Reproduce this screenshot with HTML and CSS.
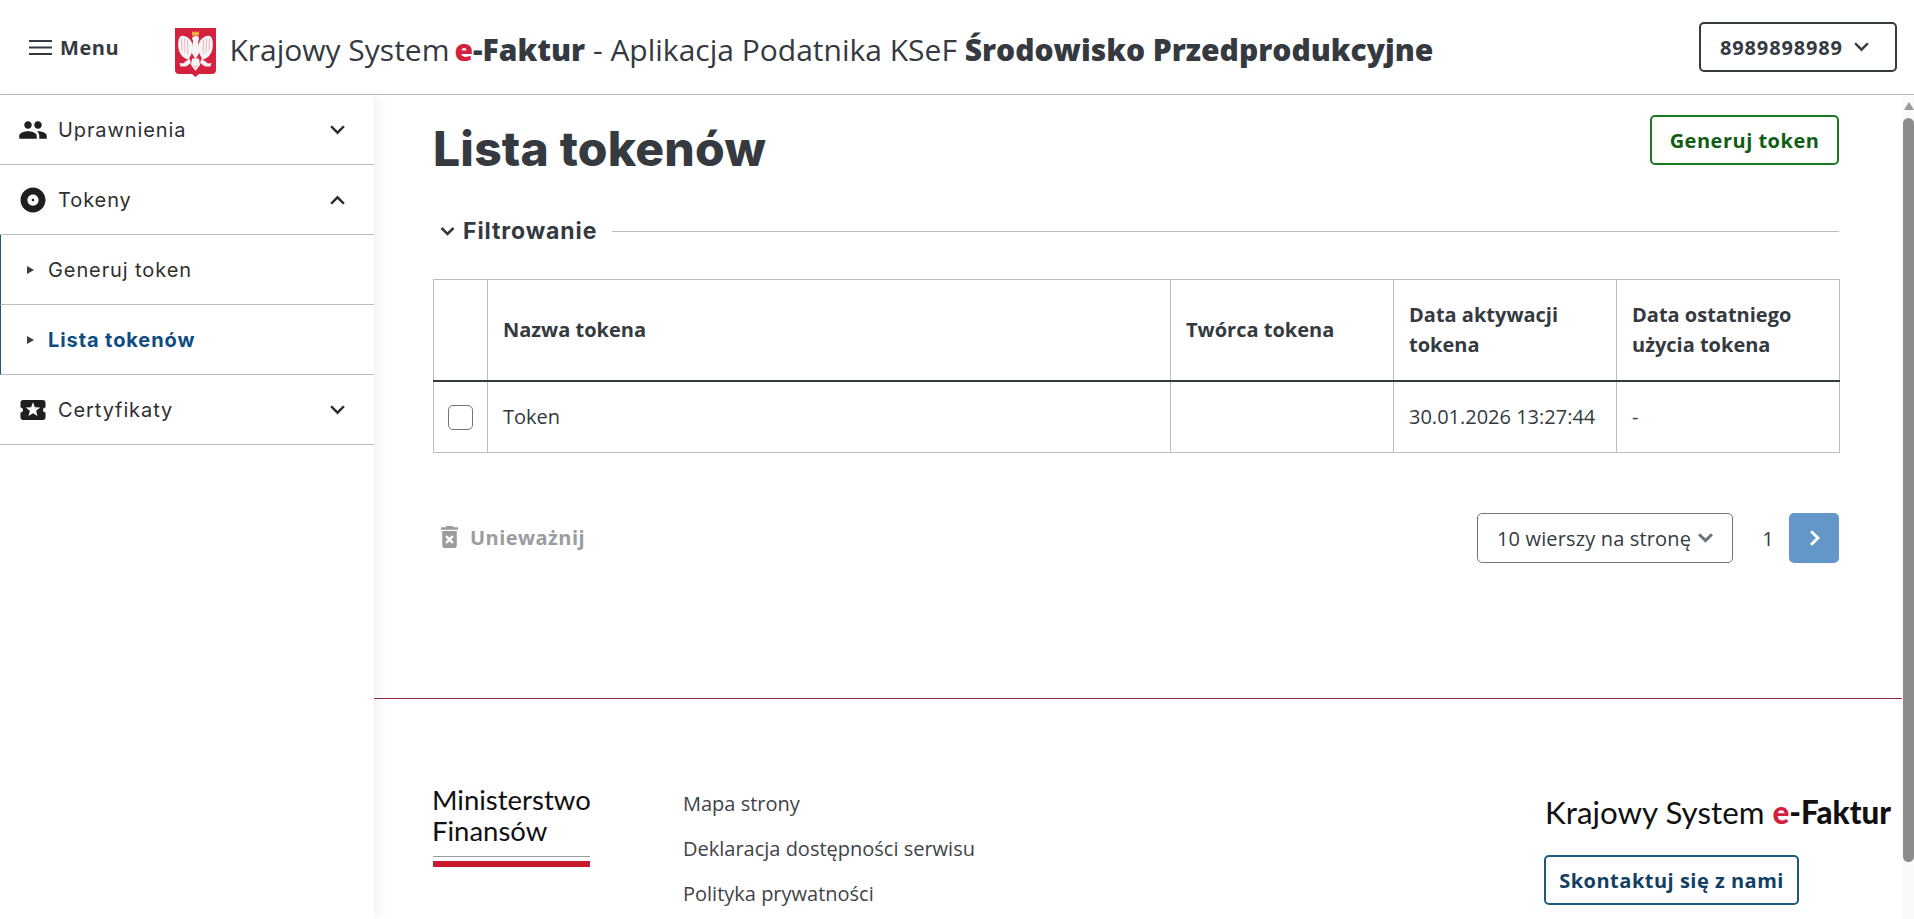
FILE: index.html
```html
<!DOCTYPE html>
<html lang="pl">
<head>
<meta charset="utf-8">
<title>Lista tokenów</title>
<link rel="stylesheet" href="styles.css">
</head>
<body>
<header class="topbar">
  <button class="menu-btn" type="button">
    <svg class="menu-icon" viewBox="0 0 23 15"><path d="M0 0h23v2H0zM0 6.500h23v2H0zM0 13h23v2H0z"/></svg>
    <span>Menu</span>
  </button>
  <svg class="emblem" viewBox="0 0 41 50">
    <path d="M0 0h41v42c0 2.500-1.500 4-4 4H24l-3.500 3L17 46H4c-2.500 0-4-1.500-4-4z" fill="#d4213d"/>
    <path d="M17 3l2 1.500L20.500 3 22 4.500 24 3v4.500h-7z" fill="#f0b13c"/>
    <g fill="#f5f5f5">
      <path d="M17 10.500c.8-2 2.200-2.800 3.800-2.800 2 0 3.200 1.300 3.200 3 0 1.500-.8 2.300-1 3.800l2 9-4.500 8-4.500-8 1.800-8.500c.2-1.500.5-2.600-.3-3.200z"/>
      <path d="M17.500 16C15.500 10.500 10.500 6.500 6 8 3 10 2.800 15 3.500 20.500 4.500 26.500 8.500 30.500 13.500 31.500L16.500 26z"/>
      <path d="M23.500 16C25.500 10.500 30.500 6.500 35 8c3 2 3.200 7 2.500 12.500C36.500 26.500 32.500 30.500 27.500 31.500L24.500 26z"/>
      <path d="M17 30.500h7l1 6.500-4.500 6-4.500-6z"/>
      <path d="M14.500 30.500L8 35.500l-3.500-.5 1 3.500h5.500l5-3.500zM26.500 30.500l6.500 5 3.500-.5-1 3.500h-5.500l-5-3.500z"/>
    </g>
    <path d="M6.500 10.500l.5 12M9.500 10l.5 15M12.500 11.500l.5 15M34.500 10.500l-.5 12M31.500 10l-.5 15M28.500 11.500l-.5 15M18.500 37l2 3 2-3" stroke="#e3aab5" stroke-width=".8" fill="none"/>
  </svg>
  <h1 class="app-title">Krajowy System<b class="brand"><span class="accent">e</span>-Faktur</b> - Aplikacja Podatnika KSeF <b>Środowisko Przedprodukcyjne</b></h1>
  <button class="nip-btn" type="button">
    <span>8989898989</span>
    <svg class="chev" viewBox="0 0 14 9"><path d="M1 1l6 6 6-6"/></svg>
  </button>
</header>

<div class="layout">
  <nav class="sidebar">
    <a class="nav-row">
      <svg class="nav-icon" viewBox="0 0 24 24"><path d="M16 11c1.660 0 2.990-1.340 2.990-3S17.660 5 16 5c-1.660 0-3 1.340-3 3s1.340 3 3 3zm-8 0c1.660 0 2.990-1.340 2.990-3S9.660 5 8 5C6.340 5 5 6.340 5 8s1.340 3 3 3zm0 2c-2.330 0-7 1.170-7 3.500V19h14v-2.500c0-2.330-4.670-3.500-7-3.500zm8 0c-.29 0-.62.02-.97.05 1.160.84 1.970 1.970 1.970 3.450V19h6v-2.500c0-2.330-4.670-3.500-7-3.500z"/></svg>
      <span class="nav-label">Uprawnienia</span>
      <svg class="chev nav-chev" viewBox="0 0 14 9"><path d="M1 1l6 6 6-6"/></svg>
    </a>
    <a class="nav-row">
      <svg class="nav-icon" viewBox="0 0 24 24"><path d="M12 2C6.480 2 2 6.480 2 12s4.480 10 10 10 10-4.480 10-10S17.520 2 12 2zm0 14.500c-2.490 0-4.500-2.010-4.500-4.500S9.510 7.500 12 7.500s4.500 2.010 4.500 4.500-2.010 4.500-4.500 4.500zm0-5.500c-.55 0-1 .45-1 1s.45 1 1 1 1-.45 1-1-.45-1-1-1z"/></svg>
      <span class="nav-label">Tokeny</span>
      <svg class="chev nav-chev" viewBox="0 0 14 9"><path d="M1 8l6-6 6 6"/></svg>
    </a>
    <a class="nav-row nav-sub"><i class="tri"></i><span class="nav-label">Generuj token</span></a>
    <a class="nav-row nav-sub is-active"><i class="tri"></i><span class="nav-label">Lista tokenów</span></a>
    <a class="nav-row">
      <svg class="nav-icon" viewBox="0 0 24 24"><path d="M20 12c0-1.100.9-2 2-2V6c0-1.100-.9-2-2-2H4c-1.100 0-1.990.9-1.990 2v4c1.100 0 1.990.9 1.990 2s-.89 2-2 2v4c0 1.100.9 2 2 2h16c1.100 0 2-.9 2-2v-4c-1.100 0-2-.9-2-2zm-4.420 4.800L12 14.500l-3.580 2.300 1.080-4.120-3.290-2.690 4.240-.25L12 5.800l1.540 3.950 4.240.25-3.290 2.690 1.090 4.110z"/></svg>
      <span class="nav-label">Certyfikaty</span>
      <svg class="chev nav-chev" viewBox="0 0 14 9"><path d="M1 1l6 6 6-6"/></svg>
    </a>
  </nav>

  <main class="main">
    <section class="content">
      <div class="page-head">
        <h2 class="page-title">Lista tokenów</h2>
        <button class="btn-green" type="button">Generuj token</button>
      </div>
      <div class="filter">
        <svg class="chev filter-chev" viewBox="0 0 14 9"><path d="M1 1l6 6 6-6"/></svg>
        <span class="filter-label">Filtrowanie</span>
        <span class="filter-line"></span>
      </div>
      <table class="tokens">
        <colgroup>
          <col class="c-check"><col class="c-name"><col class="c-author"><col class="c-date"><col class="c-last">
        </colgroup>
        <thead>
          <tr><th></th><th>Nazwa tokena</th><th>Twórca tokena</th><th>Data aktywacji tokena</th><th>Data ostatniego użycia tokena</th></tr>
        </thead>
        <tbody>
          <tr><td class="check-cell"><span class="checkbox"></span></td><td>Token</td><td></td><td>30.01.2026 13:27:44</td><td>-</td></tr>
        </tbody>
      </table>
      <div class="table-foot">
        <button class="btn-revoke" type="button">
          <svg class="trash" viewBox="5 3 14 18"><path d="M6 19c0 1.100.9 2 2 2h8c1.100 0 2-.9 2-2V7H6v12zm2.460-7.120l1.410-1.410L12 12.590l2.120-2.120 1.410 1.410L13.410 14l2.120 2.120-1.410 1.410L12 15.410l-2.120 2.120-1.410-1.410L10.590 14l-2.130-2.120zM15.500 4l-1-1h-5l-1 1H5v2h14V4z"/></svg>
          <span>Unieważnij</span>
        </button>
        <div class="pager">
          <div class="page-size">
            <span>10 wierszy na stronę</span>
            <svg class="chev size-chev" viewBox="0 0 14 9"><path d="M1 1l6 6 6-6"/></svg>
          </div>
          <span class="page-num">1</span>
          <button class="page-next" type="button"><svg viewBox="0 0 9 14"><path d="M1.500 1l6 6-6 6"/></svg></button>
        </div>
      </div>
    </section>

    <footer class="footer">
      <div class="mf-logo">
        <div class="mf-name">Ministerstwo<br>Finansów</div>
        <div class="mf-rule"></div>
        <div class="mf-bar"></div>
      </div>
      <ul class="foot-links">
        <li>Mapa strony</li>
        <li>Deklaracja dostępności serwisu</li>
        <li>Polityka prywatności</li>
      </ul>
      <div class="foot-right">
        <div class="ksef-logo">Krajowy System <b><span class="accent">e</span>-Faktur</b></div>
        <button class="btn-contact" type="button">Skontaktuj się z nami</button>
      </div>
    </footer>
  </main>
  <div class="scrollbar" aria-hidden="true">
    <i class="scroll-up"></i>
    <i class="scroll-thumb"></i>
  </div>
</div>
</body>
</html>
```
FILE: styles.css
```css
* { box-sizing: border-box; }
html, body { height: 100%; }
body {
  margin: 0;
  display: flex;
  flex-direction: column;
  overflow: hidden;
  background: #fff;
  color: #343a40;
  font-family: "Open Sans", "Liberation Sans", sans-serif;
}
button { font-family: inherit; background: none; cursor: pointer; }
.chev { fill: none; stroke: currentColor; stroke-width: 2.300; display: block; }
.accent { color: #d4213d; }

/* top bar */
.topbar {
  flex: none;
  height: 95px;
  border-bottom: 1px solid #bdbdbd;
  display: flex;
  align-items: center;
  padding: 0 17px 0 29px;
}
.menu-btn {
  display: flex;
  align-items: center;
  gap: 8px;
  border: 0;
  padding: 0;
  font-size: 20px;
  font-weight: 700;
  letter-spacing: .6px;
  color: #343a40;
}
.menu-icon { width: 23px; height: 15px; fill: #343a40; }
.emblem { width: 43px; height: 50px; margin: 11px 0 0 55px; flex: none; }
.app-title {
  margin: 4px 0 0 12px;
  font-size: 30px;
  font-weight: 400;
  white-space: nowrap;
  color: #343a40;
}
.app-title b { font-weight: 800; }
.brand { margin-left: 5px; }
.nip-btn {
  margin-left: auto;
  width: 198px;
  height: 50px;
  border: 2px solid #343a40;
  border-radius: 5px;
  display: flex;
  align-items: center;
  gap: 11px;
  padding: 0 0 0 19px;
  font-size: 20px;
  font-weight: 700;
  letter-spacing: .85px;
  color: #343a40;
}
.nip-btn .chev { width: 15px; height: 10px; }

/* layout */
.layout { flex: 1; min-height: 0; display: flex; }

.sidebar {
  flex: none;
  width: 374px;
  position: relative;
  z-index: 1;
  background: #fff;
  box-shadow: 4px 0 12px rgba(0, 0, 0, .06);
  font-family: Inter, "Liberation Sans", sans-serif;
}
.nav-row {
  height: 70px;
  display: flex;
  align-items: center;
  border-bottom: 1px solid #bdbdbd;
  padding: 0 29px 0 18px;
  color: #2f2f2f;
  font-size: 20px;
}
.nav-icon { width: 30px; height: 30px; fill: #1f1f1f; flex: none; }
.nav-label { margin-left: 10px; letter-spacing: .9px; }
.nav-chev { width: 15px; height: 10px; margin-left: auto; color: #2b2b2b; flex: none; }
.nav-sub { border-left: 1px solid #1c5a73; padding-left: 26px; }
.nav-sub .nav-label { margin-left: 14px; }
.tri {
  width: 0;
  height: 0;
  border-left: 7px solid #3c3c3c;
  border-top: 4px solid transparent;
  border-bottom: 4px solid transparent;
  flex: none;
}
.is-active .nav-label { color: #0f4c81; font-weight: 700; }

/* main */
.main { flex: 1; min-width: 0; overflow: hidden; }

.scrollbar {
  flex: none;
  width: 12px;
  padding: 7px 0 0 1px;
  background: #fafafa;
  display: flex;
  flex-direction: column;
  align-items: center;
}
.scroll-up {
  width: 0;
  height: 0;
  border-left: 5.500px solid transparent;
  border-right: 5.500px solid transparent;
  border-bottom: 8px solid #9a9a9a;
}
.scroll-thumb {
  margin-top: 8px;
  width: 11px;
  height: 744px;
  background: #8c8c8c;
  border-radius: 6px;
}

.content { padding: 20px 63px 0 59px; height: 603px; }
.page-head { display: flex; justify-content: space-between; align-items: flex-start; }
.page-title {
  margin: 0;
  font-family: Inter, "Liberation Sans", sans-serif;
  font-size: 48px;
  line-height: 68px;
  font-weight: 800;
  letter-spacing: .2px;
  color: #343a40;
}
.btn-green {
  width: 189px;
  height: 50px;
  border: 2px solid #1c7a22;
  border-radius: 5px;
  font-size: 20px;
  font-weight: 700;
  letter-spacing: .5px;
  color: #105c14;
  padding: 0;
}
.filter {
  margin-top: 33px;
  height: 30px;
  display: flex;
  align-items: center;
  padding-left: 7px;
  font-family: Inter, "Liberation Sans", sans-serif;
}
.filter-chev { width: 15px; height: 9px; color: #343a40; stroke-width: 2.600; }
.filter-label { margin-left: 8px; font-size: 23px; font-weight: 700; letter-spacing: .9px; }
.filter-line { flex: 1; height: 1px; background: #bdbdbd; margin-left: 15px; }

.tokens {
  margin-top: 33px;
  width: 1406px;
  table-layout: fixed;
  border-collapse: collapse;
  font-size: 20px;
  color: #343a40;
}
.c-check { width: 54px; }
.c-name { width: 683px; }
.c-author { width: 223px; }
.c-date { width: 223px; }
.c-last { width: 223px; }
.tokens th, .tokens td {
  border: 1px solid #bdbdbd;
  padding: 0 15px;
  text-align: left;
  line-height: 30px;
}
.tokens th { height: 101px; font-weight: 700; border-bottom: 2px solid #343a40; }
.tokens td { height: 72px; }
.tokens .check-cell { padding: 0 0 0 14px; }
.checkbox {
  display: block;
  width: 25px;
  height: 25px;
  margin-top: 2px;
  border: 1px solid #757575;
  border-radius: 5px;
}

.table-foot {
  margin-top: 60px;
  display: flex;
  justify-content: space-between;
  align-items: center;
}
.btn-revoke {
  display: flex;
  align-items: center;
  gap: 12px;
  border: 0;
  padding: 0 0 2px 8px;
  font-size: 20px;
  font-weight: 700;
  letter-spacing: .45px;
  color: #9a9c9f;
}
.trash { width: 17px; height: 22px; fill: #9a9c9f; }
.pager { display: flex; align-items: center; }
.page-size {
  width: 256px;
  height: 50px;
  border: 1px solid #757575;
  border-radius: 5px;
  display: flex;
  align-items: center;
  padding-left: 19px;
  font-size: 20px;
  letter-spacing: .15px;
  white-space: nowrap;
}
.size-chev { width: 15px; height: 10px; margin-left: 7px; color: #6c757d; stroke-width: 2.800; }
.page-num { width: 56px; padding-left: 14px; text-align: center; font-size: 20px; }
.page-next {
  width: 50px;
  height: 50px;
  border: 0;
  border-radius: 5px;
  background: #6497c9;
  padding: 0;
  display: flex;
  align-items: center;
  justify-content: center;
}
.page-next svg { width: 11px; height: 16px; fill: none; stroke: #fff; stroke-width: 2.500; }

/* footer */
.footer {
  border-top: 1px solid #9c2a45;
  height: 273px;
  padding: 85px 11px 0 59px;
  display: flex;
  align-items: flex-start;
}
.mf-logo { width: 157px; flex: none; }
.mf-name {
  font-family: Lato, "Open Sans", sans-serif;
  font-size: 27.500px;
  line-height: 31px;
  color: #111;
  margin-left: -1px;
}
.mf-rule { height: 1px; background: #9a9a9a; margin-top: 10px; }
.mf-bar { height: 6px; background: #c8192f; margin-top: 4px; }
.foot-links {
  list-style: none;
  margin: -3px 0 0 93px;
  padding: 0;
  font-size: 20px;
  line-height: 45px;
  color: #3f4347;
}
.foot-right {
  margin: 10px 0 0 auto;
  display: flex;
  flex-direction: column;
  align-items: flex-start;
}
.ksef-logo {
  font-family: Lato, "Open Sans", sans-serif;
  font-size: 31.300px;
  line-height: 36px;
  color: #111;
  white-space: nowrap;
  margin-left: 2px;
}
.ksef-logo b { font-weight: 900; }
.btn-contact {
  margin: 25px 0 0 1px;
  width: 255px;
  height: 50px;
  border: 2px solid #1c5a80;
  border-radius: 5px;
  font-size: 20px;
  font-weight: 700;
  letter-spacing: .5px;
  color: #123f63;
  padding: 0;
}
```
